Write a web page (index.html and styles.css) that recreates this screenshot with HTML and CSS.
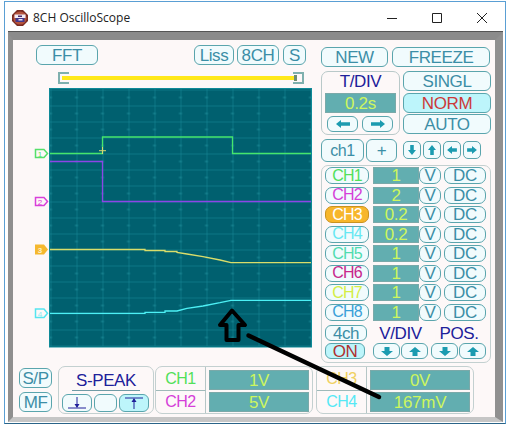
FILE: index.html
```html
<!DOCTYPE html>
<html lang="en">
<head>
<meta charset="utf-8">
<title>8CH OscilloScope</title>
<link rel="stylesheet" href="styles.css">
</head>
<body>
<svg class="defs" width="0" height="0" aria-hidden="true">
  <symbol id="arrow-wide" viewBox="0 0 14 8"><path d="M0 4 5 0V2.300H14V5.700H5V8Z"/></symbol>
  <symbol id="arrow-up" viewBox="0 0 12 9"><path d="M6 0 12 5H8.500V9H3.500V5H0Z"/></symbol>
  <symbol id="arrow-tiny" viewBox="0 0 9 11"><path d="M4.500 0 9 5.500H6.500V11H2.500V5.500H0Z"/></symbol>
</svg>
<div class="window">
  <header class="titlebar">
    <svg class="appicon" viewBox="0 0 16 16">
      <path d="M5 0H11L16 5V11L11 16H5L0 11V5Z" fill="#7a2a20"/>
      <circle cx="8" cy="8" r="6.600" fill="#b5533d"/>
      <rect x="2.500" y="4.500" width="11" height="3.500" fill="#f4ecf4"/>
      <rect x="3.500" y="8" width="9" height="4" fill="#43388c"/>
      <rect x="6" y="5.500" width="4" height="1.500" fill="#4d2a66"/>
      <rect x="6.500" y="9" width="4" height="1.500" fill="#e8e0f0"/>
    </svg>
    <span class="apptitle">8CH OscilloScope</span>
    <div class="controls">
      <svg class="ctl" viewBox="0 0 10 10"><path d="M0 5.500H10"/></svg>
      <svg class="ctl" viewBox="0 0 10 10"><path d="M.5.500H9.500V9.500H.5Z"/></svg>
      <svg class="ctl" viewBox="0 0 10 10"><path d="M0 0 10 10M10 0 0 10"/></svg>
    </div>
  </header>
  <div class="frame">
    <main class="panel">
      <div class="top">
        <section class="left">
          <div class="modes">
            <button class="b fft">FFT</button>
            <button class="b liss">Liss</button>
            <button class="b m8ch">8CH</button>
            <button class="b ms">S</button>
          </div>
          <svg class="slider" viewBox="58 72 246 12">
            <path class="bracket" d="M69 73H59V83H69M293 73H303V83H293"/>
            <path class="track" d="M62 78H297"/>
            <rect class="thumb" x="294" y="75" width="3" height="6"/>
          </svg>
          <svg class="scope" viewBox="34 88 278 260">
            <defs>
              <pattern id="grid" x="50.500" y="89.500" width="26" height="16" patternUnits="userSpaceOnUse">
                <path class="gridline" d="M0 0V16M0 0H26"/>
                <path class="gridtick" d="M-1.500 8H1.500M24.500 8H26"/>
              </pattern>
            </defs>
            <rect class="screen" x="49.500" y="88.500" width="262" height="258.500"/>
            <rect class="screengrid" x="50" y="89" width="261" height="257"/>
            <polyline class="tr g" points="50,153.500 102.500,153.500 102.500,137 232.500,137 232.500,153.500 311,153.500"/>
            <polyline class="tr p" points="50,161.500 102.500,161.500 102.500,201.500 311,201.500"/>
            <polyline class="tr y" points="50,249.500 145,249.500 145,250.500 165,250.500 165,251.500 177,251.500 177,252.500 187,254 203,256.700 220,260 231,262.700 311,262.700"/>
            <polyline class="tr c" points="50,313.300 145,313.300 145,312.300 165,312.300 165,311 177,311 187,308.300 203,306 220,302.700 231,300.300 311,300.300"/>
            <path class="cross" d="M99 150.700H106M102.500 147V154"/>
            <path class="mk mk1" d="M35.500 149.500H44L47.500 153.500 44 157.500H35.500Z"/>
            <text class="mt t1" x="40" y="156.500">1</text>
            <path class="mk mk2" d="M35.500 197.500H44L47.500 201.500 44 205.500H35.500Z"/>
            <text class="mt t2" x="40" y="204.500">2</text>
            <path class="mk3" d="M35 244.500H44L48 249.500 44 254.500H35Z"/>
            <text class="mt t3" x="40" y="252.500">3</text>
            <path class="mk mk4" d="M35.500 309H44L47.500 313.300 44 317.500H35.500Z"/>
            <text class="mt t4" x="40" y="316.500">4</text>
          </svg>
        </section>
        <section class="right">
          <div class="rowa">
            <button class="b new">NEW</button>
            <button class="b freeze">FREEZE</button>
          </div>
          <div class="rowb">
            <div class="tdiv">
              <div class="tlabel">T/DIV</div>
              <div class="val tval">0.2s</div>
              <div class="tarrows">
                <button class="b tarrow"><svg class="ic wide"><use href="#arrow-wide"/></svg></button>
                <button class="b tarrow"><svg class="ic wide flip"><use href="#arrow-wide"/></svg></button>
              </div>
            </div>
            <div class="trig">
              <button class="b tr1">SINGL</button>
              <button class="b tr2 on norm">NORM</button>
              <button class="b tr3">AUTO</button>
            </div>
          </div>
          <div class="rowc">
            <button class="b ch1sel">ch1</button>
            <button class="b plus">+</button>
            <div class="nudges">
              <button class="b nudge"><svg class="ic tiny down"><use href="#arrow-tiny"/></svg></button>
              <button class="b nudge"><svg class="ic tiny"><use href="#arrow-tiny"/></svg></button>
              <button class="b nudge"><svg class="ic tiny lft"><use href="#arrow-tiny"/></svg></button>
              <button class="b nudge"><svg class="ic tiny rgt"><use href="#arrow-tiny"/></svg></button>
            </div>
          </div>
          <div class="channels">
            <div class="chrow"><button class="b chn c1">CH1</button><div class="val cv">1</div><button class="b unit">V</button><button class="b dc">DC</button></div>
            <div class="chrow"><button class="b chn c2">CH2</button><div class="val cv">2</div><button class="b unit">V</button><button class="b dc">DC</button></div>
            <div class="chrow"><button class="b chn c3">CH3</button><div class="val cv">0.2</div><button class="b unit">V</button><button class="b dc">DC</button></div>
            <div class="chrow"><button class="b chn c4">CH4</button><div class="val cv">0.2</div><button class="b unit">V</button><button class="b dc">DC</button></div>
            <div class="chrow"><button class="b chn c5">CH5</button><div class="val cv">1</div><button class="b unit">V</button><button class="b dc">DC</button></div>
            <div class="chrow"><button class="b chn c6">CH6</button><div class="val cv">1</div><button class="b unit">V</button><button class="b dc">DC</button></div>
            <div class="chrow"><button class="b chn c7">CH7</button><div class="val cv">1</div><button class="b unit">V</button><button class="b dc">DC</button></div>
            <div class="chrow"><button class="b chn c8">CH8</button><div class="val cv">1</div><button class="b unit">V</button><button class="b dc">DC</button></div>
            <div class="chfoot">
              <div class="footl">
                <button class="b f4ch">4ch</button>
                <button class="b on fon">ON</button>
              </div>
              <div class="footgroup">
                <div class="navy flabel">V/DIV</div>
                <div class="fbtns">
                  <button class="b farrow"><svg class="ic up down"><use href="#arrow-up"/></svg></button>
                  <button class="b farrow"><svg class="ic up"><use href="#arrow-up"/></svg></button>
                </div>
              </div>
              <div class="footgroup">
                <div class="navy flabel">POS.</div>
                <div class="fbtns">
                  <button class="b farrow"><svg class="ic up down"><use href="#arrow-up"/></svg></button>
                  <button class="b farrow"><svg class="ic up"><use href="#arrow-up"/></svg></button>
                </div>
              </div>
            </div>
          </div>
        </section>
      </div>
      <div class="bottom">
        <div class="spmf">
          <button class="b sp">S/P</button>
          <button class="b mf">MF</button>
        </div>
        <div class="peak">
          <div class="navy peaktitle">S-PEAK</div>
          <div class="peakbtns">
            <button class="b pk1"><svg class="pkic" viewBox="0 0 22 14"><path d="M2 12H20M11 1V11"/><path class="fillnavy" d="M8.500 8H13.500L11 12Z"/></svg></button>
            <button class="b pk2"></button>
            <button class="b pk3 on"><svg class="pkic" viewBox="0 0 22 14"><path d="M2 2H20M11 3V13"/><path class="fillnavy" d="M8.500 6H13.500L11 2Z"/></svg></button>
          </div>
        </div>
        <div class="readout">
          <div class="rname c1t">CH1</div><div class="rcell"><div class="val rv">1V</div></div>
          <div class="rname c2t last">CH2</div><div class="rcell last"><div class="val rv">5V</div></div>
        </div>
        <div class="readout second">
          <div class="rname c3t">CH3</div><div class="rcell"><div class="val rv">0V</div></div>
          <div class="rname c4t last">CH4</div><div class="rcell last"><div class="val rv">167mV</div></div>
        </div>
      </div>
    </main>
  </div>
  <svg class="note" viewBox="4 1 502 423" aria-hidden="true">
    <path class="notearrow" d="M232 310.500 245 325H238.500V340H226.500V325H220Z"/>
    <path class="noteline" d="M248.500 335.500 379 397"/>
  </svg>
</div>
</body>
</html>
```
FILE: styles.css
```css
* { box-sizing: border-box; }
html, body { margin: 0; background: #fff; }
body { width: 508px; height: 428px; overflow: hidden; font-family: "Liberation Sans", Arial, sans-serif; }
.defs { position: absolute; }
.window {
  position: relative;
  width: 502px; height: 423px;
  margin: 1px 2px 4px 4px;
  border: 1px solid #5a9fd4;
  border-bottom-color: #2a6488;
  display: flex; flex-direction: column;
  background: #fff;
}
.titlebar { height: 30px; flex: none; display: flex; align-items: center; padding: 1px 18px 0 7px; }
.appicon { width: 16px; height: 16px; flex: none; }
.apptitle { margin-left: 5px; font: 12px "Open Sans", sans-serif; color: #222; }
.controls { margin-left: auto; display: flex; gap: 35px; }
.ctl { width: 10px; height: 10px; fill: none; stroke: #222; stroke-width: 1; display: block; }
.frame {
  width: 495px; height: 390px;
  margin-left: 3px;
  border-style: solid; border-width: 8px 8px 5px 5px;
  border-color: #8b8b8b #909090 #c6c6c6 #8f8f8f;
  box-shadow: 0 -1px 0 #555;
  flex: none;
}
.panel { width: 482px; height: 377px; background: #fdf8f8; display: flex; flex-direction: column; }
.top { display: flex; height: 326px; flex: none; }
.left { width: 308px; flex: none; }
.right { width: 170px; flex: none; }

.b {
  display: flex; align-items: center; justify-content: center;
  padding: 0; margin: 0;
  border: 1px solid #5aa5ad; border-radius: 6px;
  background: #f1fbfd;
  color: #3c8ea6;
  font: 17px/1 "Liberation Sans", Arial, sans-serif;
  letter-spacing: -.4px;
  flex: none;
}
.on { background: #bdf5fb; }
.val {
  background: #62aeb0; color: #cdf65e;
  font-size: 17px; line-height: 1; letter-spacing: -.3px;
  display: flex; align-items: center; justify-content: center;
  border: 1px solid #7aa9a9;
}
.navy { color: #20209a; font-size: 17px; letter-spacing: -.4px; }
.ic { fill: #1b9bb0; display: block; }
.wide { width: 14px; height: 8px; }
.flip { transform: scaleX(-1); }
.up { width: 12px; height: 9px; }
.tiny { width: 8px; height: 10px; }
.down { transform: rotate(180deg); }
.lft { transform: rotate(-90deg); }
.rgt { transform: rotate(90deg); }

.modes { display: flex; height: 20px; margin: 5px 0 0 23px; }
.fft { width: 62px; height: 20px; }
.liss { width: 40px; height: 20px; margin-left: 96px; }
.m8ch { width: 42px; height: 20px; margin-left: 3px; }
.ms { width: 23px; height: 20px; margin-left: 4px; }
.slider { display: block; width: 246px; height: 12px; margin: 7px 0 0 45px; }
.bracket { fill: none; stroke: #7fb0ae; stroke-width: 2; }
.track { stroke: #ffe81a; stroke-width: 4; }
.thumb { fill: #6f8f70; }

.scope { display: block; width: 278px; height: 260px; margin: 4px 0 0 21px; }
.screen { fill: #00606f; stroke: #0f8a98; stroke-width: 1; }
.screengrid { fill: url(#grid); }
.gridline { stroke: #178c99; stroke-width: 1; fill: none; }
.gridtick { stroke: #1f8f9c; stroke-width: 1; fill: none; }
.tr { fill: none; stroke-width: 1.300; }
.tr.g { stroke: #45e66c; }
.tr.p { stroke: #8d45e6; }
.tr.y { stroke: #d9dd6a; }
.tr.c { stroke: #4cf0f5; }
.cross { stroke: #d8d870; stroke-width: 1; fill: none; }
.mk { fill: #fdf8f8; stroke-width: 1.500; }
.mk1 { stroke: #55e06a; }
.mk2 { stroke: #d940d9; }
.mk3 { fill: #f5b82e; }
.mk4 { stroke: #55e5f0; }
.mt { font-size: 8px; text-anchor: middle; }
.t1 { fill: #55e06a; }
.t2 { fill: #d940d9; }
.t3 { fill: #fdf0c8; font-weight: bold; }
.t4 { fill: #8eeaf2; }

.rowa { display: flex; margin-top: 7px; }
.new { width: 67px; height: 20px; }
.freeze { width: 98px; height: 20px; margin-left: 4px; }
.rowb { display: flex; margin-top: 4px; }
.tdiv { width: 79px; height: 64px; border: 1px solid #b9c9c9; border-radius: 7px; padding: 0 3px; }
.tlabel { height: 21px; color: #20209a; font-size: 17px; letter-spacing: -.4px; line-height: 20px; text-align: center; }
.tval { height: 20px; }
.tarrows { display: flex; gap: 4px; margin: 3px 0 0 2px; }
.tarrow { width: 31px; height: 16px; }
.trig { margin-left: 3px; width: 88px; display: flex; flex-direction: column; }
.tr1 { height: 20px; width: 88px; }
.tr2 { height: 20px; width: 88px; margin-top: 2px; }
.norm { color: #cc3a3a; }
.tr3 { height: 20px; width: 88px; margin-top: 1px; }
.rowc { display: flex; margin-top: 4px; }
.ch1sel { width: 43px; height: 23px; font-size: 16px; }
.plus { width: 31px; height: 23px; margin-left: 2px; }
.nudges { display: flex; gap: 2px; margin: 2px 0 0 6px; }
.nudge { width: 18px; height: 18px; border-radius: 5px; }

.channels {
  width: 170px; height: 198px; margin-top: 3px;
  border: 1px solid #c3d0d0; border-radius: 7px;
  padding: 1px 0 0 3px;
  display: flex; flex-direction: column; gap: 2.500px;
}
.chrow { display: flex; height: 17px; flex: none; }
.chn { width: 44px; height: 17px; font-size: 16px; letter-spacing: -.8px; border-radius: 7px; }
.cv { width: 46px; height: 17px; margin-left: 4px; }
.unit { width: 22px; height: 17px; border-radius: 7px; }
.dc { width: 42px; height: 17px; margin-left: 3px; border-radius: 7px; }
.c1 { color: #52e05a; }
.c2 { color: #d53fd8; }
.c3 { color: #fff; background: #f7b62b; border-color: #c99320; }
.c4 { color: #66e8f2; }
.c5 { color: #50dcb0; }
.c6 { color: #c8288c; }
.c7 { color: #d4ee44; }
.c8 { color: #3aa0d8; }
.chfoot { display: flex; margin-top: 2px; }
.footl { width: 42px; flex: none; display: flex; flex-direction: column; gap: 2px; }
.f4ch { width: 42px; height: 16px; }
.fon { width: 40px; height: 16px; color: #b03030; }
.footgroup { width: 55px; flex: none; margin-left: 6px; }
.footgroup + .footgroup { margin-left: 3px; width: 56px; }
.flabel { height: 18px; text-align: center; line-height: 17px; }
.fbtns { display: flex; gap: 1px; }
.farrow { width: 27px; height: 16px; }

.bottom { display: flex; padding-left: 6px; flex: none; height: 48px; }
.spmf { width: 33px; padding-top: 2px; display: flex; flex-direction: column; gap: 4px; flex: none; }
.sp, .mf { width: 33px; height: 20px; }
.peak { width: 96px; height: 48px; margin-left: 6px; border: 1px solid #c3d0d0; border-radius: 7px; flex: none; padding: 0 3px; }
.peaktitle { height: 24px; margin: 0 10px; border-bottom: 1px solid #6f9ba5; line-height: 28px; text-align: center; white-space: nowrap; }
.peakbtns { display: flex; gap: 2px; margin-top: 3px; }
.pk1 { width: 30px; height: 18px; }
.pk2 { width: 23px; height: 18px; }
.pk3 { width: 30px; height: 18px; margin-left: 0; }
.pkic { width: 22px; height: 14px; fill: none; stroke: #20209a; stroke-width: 1; }
.fillnavy { fill: #20209a; stroke: none; }
.readout {
  width: 158px; height: 48px; margin-left: 1px; flex: none;
  border: 1px solid #c3d0d0; border-radius: 7px;
  display: grid; grid-template-columns: 50px 1fr; grid-template-rows: 24px 1fr;
}
.second { margin-left: 3px; }
.rname { display: flex; align-items: center; justify-content: center; font-size: 16px; letter-spacing: -.5px; border-right: 1px solid #b5c6c6; border-bottom: 1px solid #9fb9b9; }
.rname.last { border-bottom: 0; }
.rcell { padding: 3px 3px 0; }
.rcell.last { padding-top: 1px; }
.rv { height: 20px; }
.c1t { color: #52e05a; }
.c2t { color: #d53fd8; }
.c3t { color: #f0d060; }
.c4t { color: #55e8f5; }

.note { position: absolute; left: -1px; top: -1px; width: 502px; height: 423px; pointer-events: none; }
.notearrow { fill: none; stroke: #000; stroke-width: 4; stroke-linejoin: round; }
.noteline { stroke: #000; stroke-width: 4.500; stroke-linecap: round; }
```
